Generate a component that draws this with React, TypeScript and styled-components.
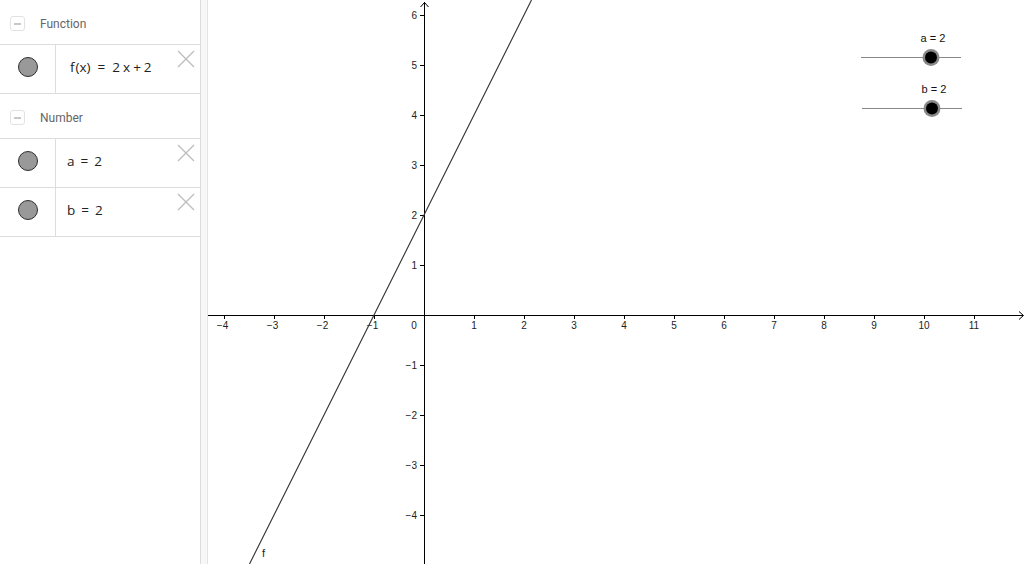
import React from "react";
import styled, { createGlobalStyle } from "styled-components";

const Global = createGlobalStyle`
  html, body { margin: 0; padding: 0; background: #fff; }
  body { font-family: Roboto, "Open Sans", "Liberation Sans", sans-serif; overflow: hidden; }
`;

const Shell = styled.div`
  display: flex;
  width: 1024px;
  height: 564px;
  overflow: hidden;
`;

const AlgebraPanel = styled.div`
  width: 200px;
  flex: none;
  display: flex;
  flex-direction: column;
  background: #fff;
`;

const Splitter = styled.div`
  width: 6px;
  flex: none;
  background: #f7f7f7;
  border-left: 1px solid #dcdcdc;
  border-right: 1px solid #e4e4e4;
  box-sizing: content-box;
`;

const Graphics = styled.div`
  flex: 1;
  position: relative;
  background: #fff;
`;

const GroupHeader = styled.div`
  display: flex;
  align-items: center;
  gap: 15px;
  padding-left: 10px;
  border-bottom: 1px solid #dddddd;
  color: #666;
  font-size: 12px;
  box-sizing: border-box;
  height: 45px;
  padding-top: 3px;
`;

const Collapse = styled.div`
  width: 13px;
  height: 13px;
  border: 1px solid #e2e2e2;
  border-radius: 3px;
  display: flex;
  align-items: center;
  justify-content: center;
  &::after {
    content: "";
    width: 7px;
    height: 2px;
    background: #c8c8c8;
  }
`;

const Row = styled.div`
  height: 48px;
  display: flex;
  border-bottom: 1px solid #dddddd;
`;

const MarkerCell = styled.div`
  width: 56px;
  flex: none;
  border-right: 1px solid #dddddd;
  display: flex;
  align-items: center;
  justify-content: center;
  padding-bottom: 5px;
  box-sizing: border-box;
`;

const Marker = styled.div`
  width: 18px;
  height: 18px;
  border-radius: 50%;
  background: #999;
  border: 1px solid #2e2e2e;
`;

const Content = styled.div<{ $pad: number }>`
  flex: 1;
  display: flex;
  align-items: center;
  padding-left: ${(p) => p.$pad}px;
  padding-bottom: 5px;
  font-size: 13.5px;
  color: #222;
  font-family: "Open Sans", Roboto, sans-serif;
  white-space: pre;
`;

const CloseBtn = styled.div`
  width: 20px;
  height: 20px;
  margin: 4px 4px 0 0;
  flex: none;
`;

const Op = styled.span<{ $m: number }>`
  margin: 0 ${(p) => p.$m}px;
`;

const Gap = styled.span<{ $w: number }>`
  display: inline-block;
  width: ${(p) => p.$w}px;
`;

const CloseIcon = () => (
  <CloseBtn>
    <svg width="20" height="20" viewBox="0 0 20 20">
      <path d="M2 2 L18 18 M18 2 L2 18" stroke="#bdbdbd" strokeWidth="1.3" fill="none" />
    </svg>
  </CloseBtn>
);

const OX = 216;
const OY = 315;
const U = 50;
const W = 817;
const H = 564;

const minus = (n: number) => (n < 0 ? "\u2212" + Math.abs(n) : String(n));

const GraphSvg = () => {
  const xs = [-4, -3, -2, -1, 1, 2, 3, 4, 5, 6, 7, 8, 9, 10, 11];
  const ys = [-4, -3, -2, -1, 1, 2, 3, 4, 5, 6];
  const f = (x: number) => 2 * x + 2;
  const x0 = (-(H - OY) / U - 2) / 2;
  const x1 = (OY / U - 2) / 2;
  const px = (x: number) => OX + x * U;
  const py = (y: number) => OY - y * U;
  return (
    <svg width={W} height={H} style={{ display: "block" }}>
      <g fontFamily="'Liberation Sans', Arial, sans-serif" fontSize="10" fill="#222">
        <line x1={0} y1={OY + 0.5} x2={W - 2} y2={OY + 0.5} stroke="#000" strokeWidth="1" />
        <path d={`M${W - 6} ${OY - 3.5} L${W - 1.5} ${OY + 0.5} L${W - 6} ${OY + 4.5}`} stroke="#000" fill="none" strokeWidth="1" />
        <line x1={OX + 0.5} y1={H} x2={OX + 0.5} y2={2} stroke="#000" strokeWidth="1" />
        <path d={`M${OX - 3.5} 7 L${OX + 0.5} 2.5 L${OX + 4.5} 7`} stroke="#000" fill="none" strokeWidth="1" />
        {xs.map((x) => (
          <g key={"x" + x}>
            <line x1={px(x) + 0.5} y1={OY} x2={px(x) + 0.5} y2={OY + 4} stroke="#000" />
            <text x={px(x) + (x < 0 ? -1.5 : 0)} y={OY + 14} textAnchor="middle">{minus(x)}</text>
          </g>
        ))}
        <text x={OX - 10} y={OY + 14} textAnchor="middle">0</text>
        {ys.map((y) => (
          <g key={"y" + y}>
            <line x1={OX - 4} y1={py(y) + 0.5} x2={OX} y2={py(y) + 0.5} stroke="#000" />
            <text x={OX - 7} y={py(y) + 4} textAnchor="end">{minus(y)}</text>
          </g>
        ))}
      </g>
      <line x1={px(x0)} y1={py(f(x0))} x2={px(x1)} y2={py(f(x1))} stroke="#333" strokeWidth="1.1" />
      <text x={54} y={557} fontFamily="'Liberation Sans', Arial, sans-serif" fontSize="11" fill="#222">f</text>
      <g fontFamily="'Liberation Sans', Arial, sans-serif" fontSize="11" fill="#111">
        <text x={725} y={42} textAnchor="middle">a = 2</text>
        <line x1={653} y1={57.5} x2={753} y2={57.5} stroke="#888" strokeWidth="1" />
        <circle cx={723} cy={57.5} r={8.5} fill="#8a8a8a" />
        <circle cx={723} cy={57.5} r={6} fill="#000" />
        <text x={726} y={93} textAnchor="middle">b = 2</text>
        <line x1={654} y1={108.5} x2={754} y2={108.5} stroke="#888" strokeWidth="1" />
        <circle cx={724} cy={108.5} r={8.5} fill="#8a8a8a" />
        <circle cx={724} cy={108.5} r={6} fill="#000" />
      </g>
    </svg>
  );
};

export default function App() {
  return (
    <>
      <Global />
      <Shell>
        <AlgebraPanel>
          <GroupHeader>
            <Collapse />
            <span>Function</span>
          </GroupHeader>
          <Row>
            <MarkerCell>
              <Marker />
            </MarkerCell>
            <Content $pad={14}>
              f<Gap $w={1} />(x)<Op $m={7}>=</Op>2<Gap $w={3} />x<Op $m={3}>+</Op>2
            </Content>
            <CloseIcon />
          </Row>
          <GroupHeader>
            <Collapse />
            <span>Number</span>
          </GroupHeader>
          <Row>
            <MarkerCell>
              <Marker />
            </MarkerCell>
            <Content $pad={11}>
              a<Op $m={6}>=</Op>2
            </Content>
            <CloseIcon />
          </Row>
          <Row>
            <MarkerCell>
              <Marker />
            </MarkerCell>
            <Content $pad={11}>
              b<Op $m={6}>=</Op>2
            </Content>
            <CloseIcon />
          </Row>
        </AlgebraPanel>
        <Splitter />
        <Graphics>
          <GraphSvg />
        </Graphics>
      </Shell>
    </>
  );
}
